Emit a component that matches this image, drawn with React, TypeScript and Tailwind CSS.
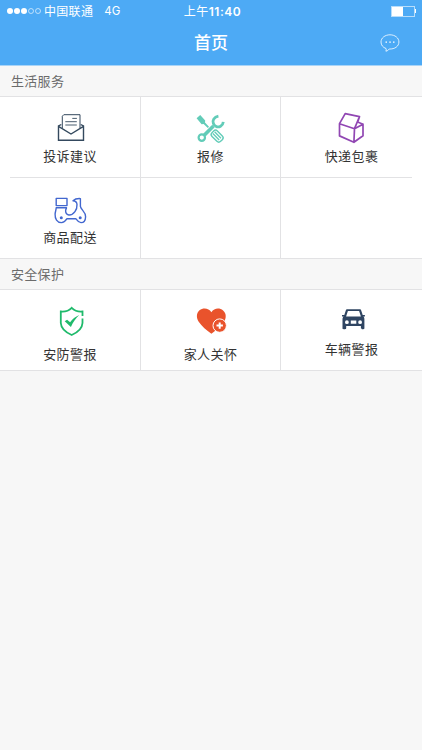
import { ReactNode } from "react";

type IconProps = {
  children: ReactNode;
  className: string;
};

function Icon({ children, className }: IconProps) {
  return (
    <svg
      viewBox="0 0 36 36"
      fill="none"
      stroke="currentColor"
      className={`h-9 w-9 shrink-0 ${className}`}
    >
      {children}
    </svg>
  );
}

function MailIcon() {
  return (
    <Icon className="text-[#34495e]">
      <path d="M10.3 18V6.2l1.5-1.5H28V18" strokeWidth="1" />
      <path d="M20.3 8.4h4.6M13.3 11.7h11.5M13.3 15h11.5" strokeWidth="0.9" />
      <path
        d="M9.3 14.5 6.5 16v14.2h25V16l-2.8-1.5M6.5 16.3 19 24l12.5-7.7"
        strokeWidth="1.4"
      />
    </Icon>
  );
}

function RepairIcon() {
  return (
    <Icon className="text-[#62ccb8]">
      <path
        d="m3.600 8.200 3.600-3.200 5 5.400-.2 2.200 4 4.200-1.200 1.200-4.200-4-2 .200z"
        fill="currentColor"
        stroke="none"
      />
      <circle cx="8.8" cy="27.6" r="3.2" strokeWidth="2.2" />
      <path d="m11.200 25.200 9.300-9.300" strokeWidth="3.6" />
      <path
        d="M25.400 6.200c-4.200.8-6.400 4-5 7.400 1.200 3.200 4.500 4.100 7.200 2.600 1.600-.9 2.500-2.300 2.700-4.300"
        strokeWidth="2.8"
      />
      <g transform="rotate(45 23.8 25.7)">
        <rect x="18.3" y="22" width="12.2" height="7.600" rx="2.600" strokeWidth="1.4" />
        <path d="M19.500 24.500h9M19.500 27h9" strokeWidth="1.300" />
      </g>
    </Icon>
  );
}

function PackageIcon() {
  return (
    <Icon className="text-[#9147b3]">
      <path
        d="m5.5 13.7 5.7-10 14.3 3-5 12zM5.5 13.7v12.2l14.4 6.4 9.1-6.500V14.2l-8.5 4.5-.6 13.6M25.5 6.8 23.7 12l5.3 2.200"
        strokeWidth="1.7"
        strokeLinejoin="round"
      />
    </Icon>
  );
}

function ScooterIcon() {
  return (
    <Icon className="text-[#4267cf]">
      <g strokeWidth="1.4" strokeLinejoin="round" strokeLinecap="round">
        <rect x="4.2" y="7.4" width="10.8" height="7.2" />
        <path d="M4.2 16.8h10.3c-1.5 2.5-1.3 6.8 2.3 7.2 5.200.2 8.500-5.500 8.200-10.500-.1-2.700-1.600-3.600-4-3.800 1.500-1.400 4.200-2.300 7.400-2.100v7.800c.6 3.600 5.300 5.300 5.200 10.300-.1 3.400-1.700 5.900-4.600 5.900-2.600 0-3.700-2-5-3.800h-9.200c-1.300 2-2.700 3.800-5.400 3.800-4.400 0-6.500-4-6.300-8.300.1-2.600 1.100-4.500 1.100-6.500z" />
      </g>
      <circle cx="9.3" cy="26.7" r="1.5" fill="currentColor" stroke="none" />
      <circle cx="28.2" cy="26.7" r="1.5" fill="currentColor" stroke="none" />
    </Icon>
  );
}

function ShieldIcon() {
  return (
    <Icon className="text-[#1fba6b]">
      <path
        d="M30.5 13V8.5c-4.100.4-8-.8-10.800-3.700-2.800 2.900-6.700 4.100-10.900 3.700V20c.3 6.200 5.200 9.500 10.900 12 5.700-2.500 10.500-5.800 10.800-12v-4.500"
        strokeWidth="1.8"
      />
      <path
        d="m12.7 18.3 2.4-1.6 3 2.6c2.300-3 5.200-5.500 9.100-7.200-3.300 3.200-5.900 6.800-8.300 11.800z"
        fill="currentColor"
        stroke="none"
      />
    </Icon>
  );
}

function HeartIcon() {
  return (
    <Icon className="text-[#e9532c]">
      <path
        d="M18.400 9.300C15.700 5 10.200 4.500 6.500 7.300c-3.400 2.700-3.200 8-.8 11.400 3.100 4.400 7.800 8.700 12.700 12 4.800-3.300 9.700-7.600 12.600-12 2.400-3.600 2.500-8.500-.9-11.300-3.700-2.900-9-2.400-11.700 1.900z"
        fill="currentColor"
        stroke="none"
      />
      <circle cx="26.7" cy="22.6" r="6.7" fill="currentColor" stroke="#fff" strokeWidth="1" />
      <path d="M26.7 19.4v6.4M23.5 22.6h6.4" stroke="#fff" strokeWidth="2" />
    </Icon>
  );
}

function CarIcon() {
  return (
    <Icon className="text-[#2f4562]">
      <path
        fill="currentColor"
        stroke="none"
        fillRule="evenodd"
        d="M13.500 6.300h12c1 0 1.500.5 1.800 1.400l1.400 4.300h2.200v1.600h-1.600c.9.800 1.100 1.600 1.100 2.800V25c0 .8-.4 1.200-1.100 1.200h-1.200c-.8 0-1.200-.4-1.200-1.200v-2H12.200v2c0 .8-.4 1.200-1.200 1.200H9.700c-.8 0-1.200-.4-1.200-1.200v-8.600c0-1.200.3-2 1.200-2.800H8V12h2.300l1.400-4.300c.3-.9.800-1.400 1.800-1.400zm.4 1.700-1.800 5.600h14.800L25.100 8zm-1 9.300a1.900 1.900 0 1 0 0 3.800 1.900 1.900 0 0 0 0-3.800zm13.200 0a1.900 1.900 0 1 0 0 3.800 1.900 1.900 0 0 0 0-3.800zm-9.300.2v3.300h5.500v-3.300z"
      />
    </Icon>
  );
}

type Service = {
  label: string;
  icon: ReactNode;
  gap: string;
};

const lifeServices: (Service | null)[] = [
  { label: "投诉建议", icon: <MailIcon />, gap: "mt-0" },
  { label: "报修", icon: <RepairIcon />, gap: "mt-0" },
  { label: "快递包裹", icon: <PackageIcon />, gap: "mt-0" },
  { label: "商品配送", icon: <ScooterIcon />, gap: "mt-0" },
  null,
  null,
];

const safetyServices: (Service | null)[] = [
  { label: "安防警报", icon: <ShieldIcon />, gap: "mt-[5px]" },
  { label: "家人关怀", icon: <HeartIcon />, gap: "mt-[5px]" },
  { label: "车辆警报", icon: <CarIcon />, gap: "mt-0" },
];

function StatusBar() {
  return (
    <div className="grid h-[22px] grid-cols-3 items-center pr-[6px] pl-[7px] text-[12px] leading-none">
      <div className="flex items-center whitespace-nowrap">
        <div className="mr-[3px] flex gap-[1px]">
          <span className="h-[6px] w-[6px] rounded-full bg-white" />
          <span className="h-[6px] w-[6px] rounded-full bg-white" />
          <span className="h-[6px] w-[6px] rounded-full bg-white" />
          <span className="h-[6px] w-[6px] rounded-full border border-white/60" />
          <span className="h-[6px] w-[6px] rounded-full border border-white/60" />
        </div>
        <span className="pt-px tracking-[0.3px]">中国联通</span>
        <span className="ml-[11px] pt-px text-[11.5px]">4G</span>
      </div>
      <div className="pt-px pl-[2px] text-center tracking-[0.5px] whitespace-nowrap">
        上午<span className="font-semibold">11:40</span>
      </div>
      <div className="flex items-center justify-end">
        <span className="flex h-[11px] w-6 border border-white/60">
          <span className="w-[11px] bg-white" />
        </span>
        <span className="h-1 w-px bg-white" />
      </div>
    </div>
  );
}

function Header() {
  return (
    <header className="h-[66px] border-b border-[#a9d4f7] bg-[#4daaf5] text-white">
      <StatusBar />
      <div className="grid h-[43px] grid-cols-3 items-center px-[22px]">
        <h1 className="col-start-2 text-center text-[17px] font-medium">首页</h1>
        <button className="justify-self-end pb-[2px]">
          <svg viewBox="0 0 20 18" fill="none" stroke="white" className="h-[18px] w-5">
            <path
              d="M10 .8C5 .8 1 3.900 1 8c0 3.100 2 5.500 5 6.500.4 1 .3 1.700-.1 2.700 1.500-.2 2.500-1.200 3.300-2.200 5.600.3 9.700-2.700 9.700-7C18.900 3.900 15 .8 10 .8z"
              strokeWidth="0.8"
            />
            <path d="M5.500 8.200h1.500M9.300 8.200h1.500M13 8.200h1.500" strokeWidth="1.200" />
          </svg>
        </button>
      </div>
    </header>
  );
}

function SectionTitle({ children }: { children: ReactNode }) {
  return (
    <h2 className="flex h-[31px] items-center border-b border-[#e2e2e4] pt-px pl-[11px] text-[13px] tracking-[0.3px] text-[#6b6b6b]">
      {children}
    </h2>
  );
}

function ServiceRow({ items }: { items: (Service | null)[] }) {
  return (
    <div className="grid h-20 grid-cols-[141px_140px_141px] bg-white">
      {items.map((item, i) => (
        <div
          key={i}
          className="flex flex-col items-center border-r border-[#e2e2e4] pt-[13px] last:border-r-0"
        >
          {item && (
            <>
              {item.icon}
              <span
                className={`text-[13px] leading-5 tracking-[0.4px] text-[#333] ${item.gap}`}
              >
                {item.label}
              </span>
            </>
          )}
        </div>
      ))}
    </div>
  );
}

export default function App() {
  return (
    <div className="min-h-screen bg-[#f7f7f7] font-['Inter','Noto_Sans_CJK_SC',sans-serif]">
      <Header />
      <section>
        <SectionTitle>生活服务</SectionTitle>
        <ServiceRow items={lifeServices.slice(0, 3)} />
        <div className="bg-white px-[10px]">
          <div className="h-px bg-[#e2e2e4]" />
        </div>
        <ServiceRow items={lifeServices.slice(3)} />
      </section>
      <section className="border-y border-[#e2e2e4]">
        <SectionTitle>安全保护</SectionTitle>
        <ServiceRow items={safetyServices} />
      </section>
    </div>
  );
}
